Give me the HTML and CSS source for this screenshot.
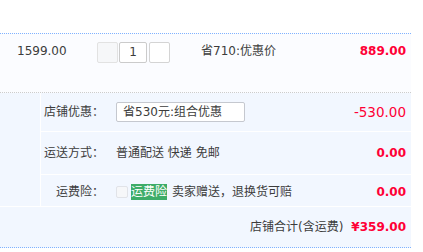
FILE: index.html
```html
<!DOCTYPE html>
<html lang="zh-CN">
<head>
<meta charset="utf-8">
<title>订单</title>
<link rel="stylesheet" href="styles.css">
</head>
<body>
<div class="order">
  <div class="item">
    <div class="cell price">1599.00</div>
    <div class="cell qty">
      <div class="stepper">
        <span class="btn minus"></span>
        <span class="num">1</span>
        <span class="btn plus"></span>
      </div>
    </div>
    <div class="cell promo">省710:优惠价</div>
    <div class="cell sum">889.00</div>
  </div>
  <div class="shop">
    <div class="shop-top">
      <div class="shop-left"></div>
      <div class="rows">
        <div class="row row-a">
          <div class="label">店铺优惠：</div>
          <div class="value"><div class="select">省530元:组合优惠</div></div>
          <div class="amount light">-530.00</div>
        </div>
        <div class="row row-b">
          <div class="label">运送方式：</div>
          <div class="value">普通配送 快递 免邮</div>
          <div class="amount">0.00</div>
        </div>
        <div class="row row-c">
          <div class="label">运费险：</div>
          <div class="value"><span class="check"></span><span class="tag">运费险</span><span class="desc">卖家赠送，退换货可赔</span></div>
          <div class="amount">0.00</div>
        </div>
      </div>
    </div>
    <div class="total">
      <span class="total-label">店铺合计(含运费)</span>
      <span class="total-sum">¥359.00</span>
    </div>
  </div>
</div>
</body>
</html>
```

FILE: styles.css
```css
html, body {
  margin: 0;
  padding: 0;
  background: #ffffff;
}
body {
  font-family: "DejaVu Sans", "Noto Sans CJK SC", sans-serif;
  font-size: 12px;
  color: #3c3c3c;
}
.order {
  width: 411px;
  margin-top: 33px;
}
.item {
  display: flex;
  align-items: flex-start;
  height: 50px;
  padding-top: 8px;
  box-sizing: content-box;
  background: #fbfcff;
  border-top: 1px dotted #80b2ff;
  border-bottom: 1px dotted #cccccc;
}
.cell {
  line-height: 17px;
  padding-top: 1px;
}
.price {
  width: 80px;
  padding-left: 17px;
}
.qty {
  width: 104px;
  padding-top: 0;
}
.stepper {
  display: flex;
  gap: 1px;
}
.btn, .num {
  display: block;
  box-sizing: border-box;
  height: 21px;
  border: 1px solid #d4d4d4;
  border-radius: 2px;
  background: #ffffff;
}
.minus {
  width: 21px;
  background: #f6f7f9;
  border-color: #e2e2e2;
}
.num {
  width: 28px;
  text-align: center;
  line-height: 18px;
  border-color: #cbcbcb;
}
.plus {
  width: 21px;
  margin-left: 1px;
}
.promo {
  flex: 1;
}
.sum {
  padding-right: 5px;
  font-weight: bold;
  color: #ff0036;
}
.shop {
  background: #f2f7ff;
  border-bottom: 1px dotted #80b2ff;
}
.shop-top {
  display: flex;
  border-bottom: 1px solid #ffffff;
}
.shop-left {
  width: 40px;
  border-right: 1px solid #ffffff;
}
.rows {
  flex: 1;
}
.row {
  display: flex;
  align-items: center;
  line-height: 16px;
}
.row-a {
  height: 38px;
  border-bottom: 1px solid #ffffff;
}
.row-b {
  height: 42px;
  border-bottom: 1px solid #ffffff;
}
.row-c {
  height: 31px;
  padding-top: 2px;
  box-sizing: border-box;
}
.label {
  width: 63px;
  text-align: right;
}
.value {
  flex: 1;
  margin-left: 12px;
  display: flex;
  align-items: center;
}
.select {
  box-sizing: border-box;
  width: 129px;
  height: 20px;
  line-height: 18px;
  padding-left: 6px;
  background: #ffffff;
  border: 1px solid #c5c8cf;
  border-radius: 2px;
}
.amount {
  padding-right: 5px;
  font-weight: bold;
  color: #ff0036;
}
.amount.light {
  font-weight: normal;
  font-size: 13.5px;
}
.check {
  display: block;
  box-sizing: border-box;
  width: 12px;
  height: 12px;
  border: 1px solid #e1e3e8;
  border-radius: 2px;
  background: #f6f7f9;
}
.tag {
  display: block;
  margin-left: 3px;
  padding: 0;
  height: 16px;
  line-height: 16px;
  background: #3dac68;
  color: #ffffff;
}
.desc {
  margin-left: 5px;
}
.total {
  display: flex;
  justify-content: flex-end;
  align-items: center;
  height: 40px;
  padding-right: 5px;
  line-height: 16px;
}
.total-sum {
  margin-left: 8px;
  font-weight: bold;
  color: #ff0036;
}
```
